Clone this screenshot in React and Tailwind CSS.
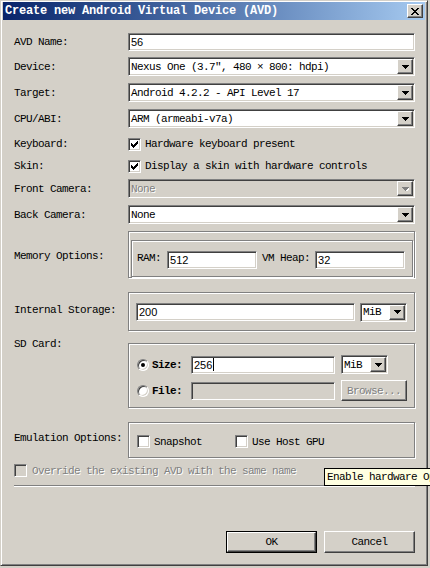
const mono = "font-['Liberation_Mono',monospace] text-[11px] tracking-[-0.6px] leading-[14px]";
const sans = "font-['Liberation_Sans',sans-serif] text-[11px] leading-[14px]";
const sunken =
  'border border-t-[#808080] border-l-[#808080] border-r-white border-b-white shadow-[inset_1px_1px_0_#404040,inset_-1px_-1px_0_#d4d0c8]';
const raised =
  'border border-t-white border-l-white border-r-[#404040] border-b-[#404040] shadow-[inset_-1px_-1px_0_#808080]';
const etched = 'border border-[#808080] shadow-[inset_1px_1px_0_#fff,1px_1px_0_#fff]';
const grayText = 'text-[#808080] [text-shadow:1px_1px_0_#fff]';

const Edit = ({ value, className = '', disabled, caret }) => (
  <div
    className={`${sunken} ${disabled ? 'bg-[#d4d0c8]' : 'bg-white'} ${sans} flex items-center pl-[2px] text-black ${className}`}
  >
    {value}
    {caret && <span className="ml-px h-[13px] w-px bg-black" />}
  </div>
);

const Combo = ({ value, className = '', disabled }) => (
  <div className={`${sunken} ${disabled ? 'bg-[#d4d0c8]' : 'bg-white'} flex items-stretch p-px ${className}`}>
    <div className={`${mono} flex flex-1 items-center overflow-hidden whitespace-nowrap pl-px ${disabled ? grayText : 'text-black'}`}>
      {value}
    </div>
    <div className={`${raised} flex w-[16px] items-center justify-center bg-[#d4d0c8]`}>
      <svg width="7" height="4" viewBox="0 0 7 4" shapeRendering="crispEdges">
        {disabled && <path d="M1 1h7L4.5 5z" fill="#fff" />}
        <path d="M0 0h7L3.5 4z" fill={disabled ? '#808080' : '#000'} />
      </svg>
    </div>
  </div>
);

const Check = ({ checked, disabled }) => (
  <div
    className={`${sunken} flex h-[13px] w-[13px] shrink-0 items-center justify-center ${disabled ? 'bg-[#d4d0c8]' : 'bg-white'}`}
  >
    {checked && (
      <svg width="7" height="7" viewBox="0 0 7 7" shapeRendering="crispEdges">
        <path d="M0 2 L2 4 L7 -1 L7 2 L2 7 L0 5 Z" fill="#000" />
      </svg>
    )}
  </div>
);

const Radio = ({ checked }) => (
  <div className="flex h-[12px] w-[12px] shrink-0 items-center justify-center rounded-full border border-t-[#808080] border-l-[#808080] border-r-white border-b-white bg-white shadow-[inset_1px_1px_0_#404040,inset_-1px_-1px_0_#d4d0c8]">
    {checked && <div className="h-[4px] w-[4px] rounded-full bg-black" />}
  </div>
);

const Label = ({ children, className = '' }) => (
  <div className={`${mono} whitespace-nowrap text-black ${className}`}>{children}</div>
);

export default function App() {
  return (
    <div className="relative h-[568px] w-[430px] overflow-hidden bg-[#d4d0c8]">
      <div className="h-[566px] w-[428px] border border-t-[#d4d0c8] border-l-[#d4d0c8] border-r-[#404040] border-b-[#404040] px-[2px] pt-px shadow-[inset_1px_1px_0_#fff,inset_-1px_-1px_0_#808080]">
        {/* title bar */}
        <div className="flex h-[18px] items-center bg-linear-to-r from-[#0a246a] to-[#a6caf0] pl-[2px] pr-[2px]">
          <div className="flex-1 whitespace-nowrap font-['Liberation_Mono',monospace] text-[12px] font-bold tracking-[-0.2px] text-white">
            Create new Android Virtual Device (AVD)
          </div>
          <div className={`${raised} flex h-[14px] w-[16px] items-center justify-center bg-[#d4d0c8]`}>
            <svg width="8" height="7" viewBox="0 0 8 7" shapeRendering="crispEdges">
              <path d="M0 0h2l2 2.5L6 0h2L5 3.5 8 7H6L4 4.5 2 7H0l3-3.5z" fill="#000" />
            </svg>
          </div>
        </div>

        <div className="pl-[11px] pr-[10px]">
          <div className="mt-[13px] grid h-[18px] grid-cols-[114px_1fr] items-center">
            <Label>AVD Name:</Label>
            <Edit value="56" className="h-[18px]" />
          </div>
          <div className="mt-[6px] grid h-[19px] grid-cols-[114px_1fr] items-center">
            <Label>Device:</Label>
            <Combo value="Nexus One (3.7″, 480 × 800: hdpi)" className="h-[19px]" />
          </div>
          <div className="mt-[7px] grid h-[19px] grid-cols-[114px_1fr] items-center">
            <Label>Target:</Label>
            <Combo value="Android 4.2.2 - API Level 17" className="h-[19px]" />
          </div>
          <div className="mt-[7px] grid h-[19px] grid-cols-[114px_1fr] items-center">
            <Label>CPU/ABI:</Label>
            <Combo value="ARM (armeabi-v7a)" className="h-[19px]" />
          </div>
          <div className="mt-[9px] grid h-[13px] grid-cols-[114px_1fr] items-center">
            <Label>Keyboard:</Label>
            <div className="flex items-center gap-[4px]">
              <Check checked />
              <Label>Hardware keyboard present</Label>
            </div>
          </div>
          <div className="mt-[9px] grid h-[13px] grid-cols-[114px_1fr] items-center">
            <Label>Skin:</Label>
            <div className="flex items-center gap-[4px]">
              <Check checked />
              <Label>Display a skin with hardware controls</Label>
            </div>
          </div>
          <div className="mt-[7px] grid h-[19px] grid-cols-[114px_1fr] items-center">
            <Label>Front Camera:</Label>
            <Combo value="None" disabled className="h-[19px]" />
          </div>
          <div className="mt-[7px] grid h-[19px] grid-cols-[114px_1fr] items-center">
            <Label>Back Camera:</Label>
            <Combo value="None" className="h-[19px]" />
          </div>

          {/* memory */}
          <div className="mt-[6px] grid h-[48px] grid-cols-[114px_1fr] items-center">
            <Label className="pt-[4px]">Memory Options:</Label>
            <div className={`${etched} h-[47px] pl-[2px] pr-px pt-[8px]`}>
              <div className={`${etched} flex h-[37px] items-start pl-[5px] pt-[10px]`}>
                <Label>RAM:</Label>
                <Edit value="512" className="ml-[6px] h-[18px] w-[90px]" />
                <Label className="ml-[5px]">VM Heap:</Label>
                <Edit value="32" className="ml-[5px] h-[18px] w-[90px]" />
              </div>
            </div>
          </div>

          {/* internal storage */}
          <div className="mt-[13px] grid h-[40px] grid-cols-[114px_1fr] items-center">
            <Label className="-mt-[3px]">Internal Storage:</Label>
            <div className={`${etched} flex h-[39px] items-center pl-[7px] pt-[2px]`}>
              <Edit value="200" className="h-[18px] w-[219px]" />
              <Combo value="MiB" className="ml-[5px] h-[19px] w-[47px]" />
            </div>
          </div>

          {/* sd card */}
          <div className="mt-[6px] grid grid-cols-[114px_1fr] items-start">
            <Label>SD Card:</Label>
            <div className={`${etched} mt-[6px] h-[65px] pl-[8px] pt-[11px]`}>
              <div className="flex h-[19px] items-center">
                <Radio checked />
                <Label className="ml-[3px] w-[39px] font-bold">Size:</Label>
                <Edit value="256" caret className="h-[18px] w-[144px]" />
                <Combo value="MiB" className="ml-[6px] h-[19px] w-[47px]" />
              </div>
              <div className="mt-[6px] flex h-[21px] items-center">
                <Radio />
                <Label className="ml-[3px] w-[39px] font-bold">File:</Label>
                <Edit value="" disabled className="h-[18px] w-[144px]" />
                <div
                  className={`${raised} ${mono} ${grayText} ml-[6px] flex h-[21px] w-[66px] items-center justify-center`}
                >
                  Browse...
                </div>
              </div>
            </div>
          </div>

          {/* emulation */}
          <div className="mt-[13px] grid h-[37px] grid-cols-[114px_1fr] items-center">
            <Label className="-mt-[3px]">Emulation Options:</Label>
            <div className={`${etched} flex h-[36px] items-center pl-[8px] pt-[4px]`}>
              <Check />
              <Label className="ml-[4px]">Snapshot</Label>
              <div className="ml-[33px]">
                <Check />
              </div>
              <Label className="ml-[4px]">Use Host GPU</Label>
            </div>
          </div>

          <div className="mt-[6px] flex h-[13px] items-center">
            <Check disabled />
            <div className={`${mono} ${grayText} ml-[5px] whitespace-nowrap`}>
              Override the existing AVD with the same name
            </div>
          </div>

          <div className="mt-[8px] h-[2px] border-t border-b border-t-[#808080] border-b-white" />

          <div className="mt-[44px] flex justify-end gap-[7px]">
            <div className="h-[22px] w-[91px] border border-black">
              <div className={`${raised} ${mono} flex h-full items-center justify-center text-black`}>OK</div>
            </div>
            <div className={`${raised} ${mono} flex h-[22px] w-[91px] items-center justify-center text-black`}>
              Cancel
            </div>
          </div>
        </div>
      </div>

      {/* tooltip */}
      <div
        className={`${mono} absolute left-[324px] top-[468px] flex h-[18px] items-center whitespace-nowrap border border-black bg-[#ffffe1] pl-[2px] pr-[4px] text-black`}
      >
        Enable hardware OpenGL ES emulation
      </div>
    </div>
  );
}
